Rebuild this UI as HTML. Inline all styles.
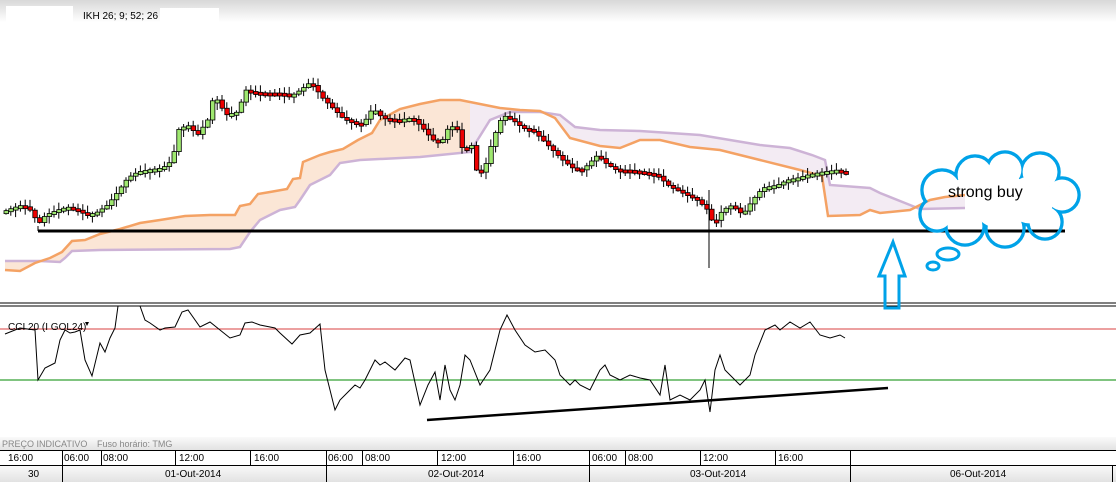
<!DOCTYPE html>
<html><head><meta charset="utf-8"><style>
body{margin:0;width:1116px;height:482px;overflow:hidden;background:#fff;font-family:"Liberation Sans",sans-serif}
</style></head><body>
<svg id="s" width="1116" height="482" xmlns="http://www.w3.org/2000/svg" style="position:absolute;left:0;top:0">
<defs><linearGradient id="tg" x1="0" y1="0" x2="0" y2="1"><stop offset="0" stop-color="#d8d8d8"/><stop offset="1" stop-color="#fff"/></linearGradient>
<linearGradient id="bg" x1="0" y1="0" x2="0" y2="1"><stop offset="0" stop-color="#fafafa"/><stop offset="1" stop-color="#e2e2e2"/></linearGradient>
<clipPath id="cA"><rect x="0" y="0" width="470" height="300"/></clipPath>
<clipPath id="cB"><rect x="470" y="0" width="700" height="300"/></clipPath>
<mask id="cm" maskUnits="userSpaceOnUse" x="0" y="0" width="1116" height="482"><rect x="0" y="0" width="1116" height="482" fill="#fff"/><g id="cmg"></g></mask></defs>
<rect x="0" y="0" width="1116" height="22" fill="url(#tg)"/>
<rect x="6" y="6" width="67" height="16" fill="#fff"/>
<rect x="160" y="8" width="59" height="14" fill="#fff"/>
<text x="83" y="19" font-size="10" fill="#000">IKH 26; 9; 52; 26</text>
<g id="cloudfill"></g>
<g id="candles"></g>
<line x1="38" y1="231" x2="1065" y2="231" stroke="#000" stroke-width="3"/>
<line x1="38" y1="226" x2="38" y2="231" stroke="#000" stroke-width="1"/>
<line x1="0" y1="303" x2="1116" y2="303" stroke="#000" stroke-width="1"/>
<line x1="0" y1="306" x2="1116" y2="306" stroke="#000" stroke-width="1"/>
<line x1="0" y1="329" x2="1116" y2="329" stroke="#c00" stroke-width="0.8"/>
<line x1="0" y1="380" x2="1116" y2="380" stroke="#080" stroke-width="1"/>
<text x="8" y="330" font-size="10" fill="#000">CCI 20 (I GOL24)</text>
<path d="M85 322 l4 0 l-2 4z" fill="#000"/>
<polyline id="cci" fill="none" stroke="#000" stroke-width="1"/>
<line x1="427" y1="420" x2="888" y2="388" stroke="#000" stroke-width="2.5"/>
<rect x="0" y="437" width="1116" height="13" fill="url(#bg)"/>
<text x="2" y="447" font-size="9" fill="#888">PREÇO INDICATIVO</text><text x="97" y="447" font-size="9" fill="#888">Fuso horário: TMG</text>
<rect x="0" y="450" width="1116" height="15" fill="#fff"/>
<rect x="0" y="465" width="1116" height="17" fill="url(#bg)"/>
<line x1="0" y1="450.5" x2="1116" y2="450.5" stroke="#000"/>
<line x1="0" y1="465.5" x2="1116" y2="465.5" stroke="#000"/>
<g id="tl" stroke="#000"></g>
<g font-size="10" fill="#000">
<text x="8" y="461">16:00</text><text x="64" y="461">06:00</text><text x="103" y="461">08:00</text><text x="179" y="461">12:00</text><text x="254" y="461">16:00</text><text x="328" y="461">06:00</text><text x="365" y="461">08:00</text><text x="441" y="461">12:00</text><text x="516" y="461">16:00</text><text x="592" y="461">06:00</text><text x="628" y="461">08:00</text><text x="703" y="461">12:00</text><text x="778" y="461">16:00</text>
<text x="28" y="477">30</text><text x="165" y="477">01-Out-2014</text><text x="428" y="477">02-Out-2014</text><text x="690" y="477">03-Out-2014</text><text x="950" y="477">06-Out-2014</text>
</g>
<g id="cl" mask="url(#cm)"></g>
<path d="M885 308 L885 276 L879 276 L893 242 L905 276 L899 276 L899 308 Z" fill="none" stroke="#00a2e8" stroke-width="3"/>
<text id="sb" x="948" y="197" font-size="16" fill="#000">strong buy</text>
</svg>
<script>
(function(){
var s=document.getElementById('s'),NS='http://www.w3.org/2000/svg';
function el(p,t,a){var e=document.createElementNS(NS,t);for(var k in a)e.setAttribute(k,a[k]);p.appendChild(e);return e}
function pts(a){return a.map(function(p){return p.join(',')}).join(' ')}
var org=[[5,270],[20,271],[35,263],[50,258],[62,252],[72,241],[85,240],[100,234],[120,229],[140,223],[160,220],[185,216],[210,215],[235,215],[240,206],[250,204],[258,194],[270,192],[287,189],[293,179],[300,178],[303,162],[320,155],[330,152],[343,149],[358,140],[372,133],[380,120],[400,109],[420,104],[440,100],[460,100],[480,104],[500,108],[520,110],[540,111],[555,118],[570,138],[600,146],[620,148],[640,140],[660,140],[690,147],[720,150],[760,160],[800,170],[822,176],[828,216],[860,215],[870,210],[880,213],[910,210],[920,205],[930,200],[945,197],[965,195]];
var pur=[[5,261],[40,261],[60,262],[65,258],[72,251],[100,250],[230,249],[240,247],[250,232],[260,220],[280,210],[295,207],[300,200],[310,185],[330,175],[340,163],[360,160],[420,157],[440,155],[470,152],[490,120],[510,112],[540,112],[560,115],[575,127],[600,130],[640,131],[700,135],[760,145],[790,148],[812,155],[825,160],[830,185],[870,188],[880,193],[905,203],[920,209],[965,208]];
var cf=document.getElementById('cloudfill');
var poly=pts(org.concat(pur.slice().reverse()));
el(cf,'polygon',{points:poly,fill:'#fbe6d6','clip-path':'url(#cA)'});
el(cf,'polygon',{points:poly,fill:'#f3ebf3','clip-path':'url(#cB)'});
el(cf,'polyline',{points:pts(pur),fill:'none',stroke:'#cdb3d6','stroke-width':2.5});
el(cf,'polyline',{points:pts(org),fill:'none',stroke:'#f4a264','stroke-width':2.5});
var pp=[[5,212],[15,208],[25,205],[35,212],[40,225],[48,215],[60,210],[70,207],[80,210],[90,215],[100,212],[110,205],[120,192],[125,185],[130,178],[140,172],[150,170],[165,168],[175,160],[180,130],[190,125],[200,135],[210,120],[215,100],[220,100],[228,115],[240,112],[248,90],[255,92],[265,93],[280,93],[295,95],[303,90],[313,82],[325,98],[335,108],[345,118],[355,122],[365,125],[375,108],[385,118],[400,120],[415,118],[425,128],[435,140],[445,140],[452,125],[460,130],[465,150],[475,145],[480,178],[488,165],[495,140],[505,115],[515,120],[525,128],[535,130],[545,140],[555,150],[565,160],[575,168],[585,170],[595,160],[600,155],[610,165],[620,170],[630,170],[645,172],[660,175],[670,185],[680,190],[690,195],[700,200],[710,210],[716,225],[725,210],[735,205],[745,215],[755,200],[765,188],[780,185],[790,180],[800,178],[810,175],[825,172],[840,170],[845,172]];
function yat(x){for(var i=1;i<pp.length;i++)if(pp[i][0]>=x){var a=pp[i-1],b=pp[i];return a[1]+(b[1]-a[1])*(x-a[0])/(b[0]-a[0])}return 172}
var cg=document.getElementById('candles');
for(var x=6,i=0;x<846;x+=4.8,i++){var y0=yat(x-2.4),y1=yat(x+2.4);var up=y1<y0;var tp=Math.min(y0,y1),bt=Math.max(y0,y1);if(bt-tp<3){bt=tp+3}
var w=2+((i*7)%6);el(cg,'line',{x1:x,y1:tp-w,x2:x,y2:bt+((i*3)%7)+1,stroke:'#000','stroke-width':1});
el(cg,'rect',{x:x-2,y:tp,width:4.5,height:bt-tp,fill:up?'#9fe870':'#e00',stroke:'#000','stroke-width':0.8});}
el(cg,'line',{x1:709,y1:190,x2:709,y2:268,stroke:'#000','stroke-width':1});
var cci=[[5,334],[20,328],[35,330],[38,380],[45,368],[55,363],[60,340],[65,330],[70,333],[75,332],[80,330],[85,360],[92,376],[100,343],[105,352],[110,338],[115,328],[118,306],[140,306],[145,320],[150,323],[160,330],[165,328],[175,327],[182,312],[188,310],[200,327],[210,322],[220,330],[230,338],[240,335],[245,323],[252,322],[260,325],[275,328],[280,333],[292,344],[300,335],[310,333],[320,324],[325,370],[335,410],[340,400],[350,390],[355,385],[360,388],[365,380],[375,360],[380,365],[385,362],[395,370],[405,358],[410,360],[420,405],[428,385],[435,372],[440,400],[445,365],[450,390],[455,400],[460,385],[465,355],[470,360],[480,385],[490,370],[495,350],[500,330],[507,315],[515,330],[525,345],[535,352],[545,350],[555,360],[560,375],[570,385],[575,380],[580,385],[590,390],[600,370],[605,365],[610,375],[620,380],[630,375],[640,378],[650,380],[660,395],[665,365],[670,400],[680,395],[690,400],[700,390],[705,380],[710,412],[715,370],[720,355],[725,370],[730,375],[740,385],[750,375],[755,355],[765,330],[775,325],[780,330],[790,322],[800,328],[810,322],[820,335],[830,338],[840,335],[845,338]];
document.getElementById('cci').setAttribute('points',pts(cci));
var tl=document.getElementById('tl');
[62,101,175,250,326,362,437,513,589,625,700,775,850].forEach(function(x){el(tl,'line',{x1:x+.5,y1:450,x2:x+.5,y2:465})});
[62,326,589,850,1112].forEach(function(x){el(tl,'line',{x1:x+.5,y1:465,x2:x+.5,y2:482})});
var cl=document.getElementById('cl'),cmg=document.getElementById('cmg');
var cs=[[942,190,20],[975,175,19],[1005,170,18],[1040,172,19],[1062,195,17],[1045,222,17],[1005,228,19],[965,226,19],[937,214,17],[1000,200,30],[970,200,25],[1030,200,25]];
cs.forEach(function(c){el(cl,'circle',{cx:c[0],cy:c[1],r:c[2],fill:'none',stroke:'#00a2e8','stroke-width':3.5});el(cmg,'circle',{cx:c[0],cy:c[1],r:c[2]-1.6,fill:'#000'})});
el(s,'ellipse',{cx:948,cy:254,rx:11,ry:6,fill:'none',stroke:'#00a2e8','stroke-width':3});
el(s,'ellipse',{cx:933,cy:266,rx:6,ry:4,fill:'none',stroke:'#00a2e8','stroke-width':3});
s.appendChild(document.getElementById('sb'));
})();
</script>
</body></html>
